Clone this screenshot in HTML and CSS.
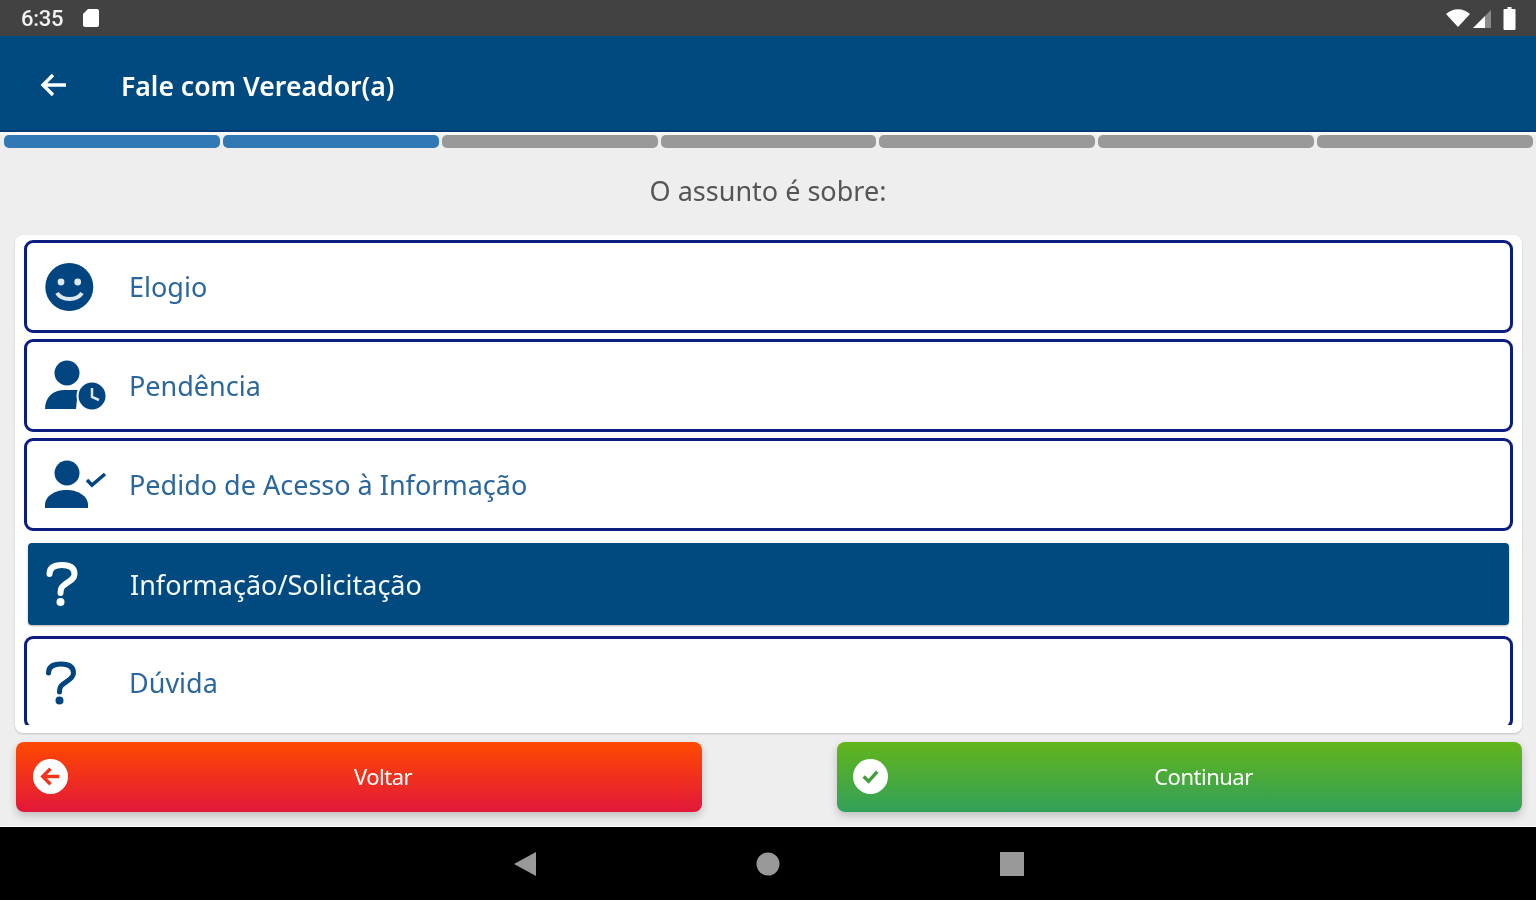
FILE: index.html
```html
<!DOCTYPE html>
<html lang="pt">
<head>
<meta charset="utf-8">
<title>Fale com Vereador(a)</title>
<link rel="stylesheet" href="styles.css">
</head>
<body>
<div class="page">
  <header class="statusbar">
    <div class="status-left">
      <span class="clock">6:35</span>
      <svg class="sd" viewBox="0 0 16 18"><path d="M5 0H14a2 2 0 0 1 2 2V16a2 2 0 0 1-2 2H2a2 2 0 0 1-2-2V5Z" fill="#fff"/></svg>
    </div>
    <div class="status-right">
      <svg class="wifi" viewBox="0 0 24 18"><path d="M0 5C7-1.5 17-1.500 24 5L12 18Z" fill="#fff"/></svg>
      <svg class="signal" viewBox="0 0 18 18"><path d="M0 18 12 6V18Z" fill="#fff"/><path d="M12 6 18 0V18H12Z" fill="#8a8a8a"/></svg>
      <svg class="battery" viewBox="0 0 12 23"><path d="M4 0H8V2H11a1 1 0 0 1 1 1V22a1 1 0 0 1-1 1H1a1 1 0 0 1-1-1V3a1 1 0 0 1 1-1H4Z" fill="#fff"/></svg>
    </div>
  </header>

  <div class="appbar">
    <svg class="back" viewBox="0 0 26 24"><path d="M13 2 3 12 13 22M3 12H26" fill="none" stroke="#fff" stroke-width="3.400"/></svg>
    <h1 class="apptitle">Fale com Vereador(a)</h1>
  </div>

  <main class="content">
    <div class="progress">
      <span class="step done"></span>
      <span class="step done"></span>
      <span class="step"></span>
      <span class="step"></span>
      <span class="step"></span>
      <span class="step"></span>
      <span class="step"></span>
    </div>
    <p class="question">O assunto é sobre:</p>
    <section class="card">
      <div class="list">
        <div class="item">
          <svg class="icon" viewBox="0 0 64 64">
            <circle cx="24.300" cy="32" r="24" fill="#00457f"/>
            <circle cx="16" cy="27" r="3.400" fill="#dfe8f0"/>
            <circle cx="32.700" cy="27" r="3.400" fill="#dfe8f0"/>
            <path d="M12 38C17 46 32 46 37 38" fill="none" stroke="#dfe8f0" stroke-width="4"/>
          </svg>
          <span class="label">Elogio</span>
        </div>
        <div class="item">
          <svg class="icon" viewBox="0 0 64 64">
            <circle cx="22" cy="19" r="12.500" fill="#00457f"/>
            <path d="M0 55C0 43 8 36 20 36H33L31 55Z" fill="#00457f"/>
            <circle cx="47" cy="42" r="15.500" fill="#fff"/>
            <circle cx="47" cy="42" r="13.500" fill="#00457f"/>
            <path d="M47 34V43L54 46" fill="none" stroke="#dfe8f0" stroke-width="2.500"/>
          </svg>
          <span class="label">Pendência</span>
        </div>
        <div class="item">
          <svg class="icon" viewBox="0 0 64 64">
            <circle cx="22" cy="20" r="12.500" fill="#00457f"/>
            <path d="M0 55V52C0 43 10 37 21.500 37S43 43 43 52V55Z" fill="#00457f"/>
            <path d="M42 27 47 32 60 21" fill="none" stroke="#00457f" stroke-width="3.500"/>
          </svg>
          <span class="label">Pedido de Acesso à Informação</span>
        </div>
        <div class="item selected">
          <svg class="icon" viewBox="0 0 64 64">
            <path d="M3.500 22C3.500 15 9 13 16 13C23 13 28.500 15 28.500 22C28.500 28 21 30 16.500 34.500C15 36 14.500 38 14.500 41" fill="none" stroke="#fff" stroke-width="6" stroke-linecap="round"/>
            <circle cx="14.500" cy="50" r="4" fill="#fff"/>
          </svg>
          <span class="label">Informação/Solicitação</span>
        </div>
        <div class="item">
          <svg class="icon" viewBox="0 0 64 64">
            <path d="M3.500 22C3.500 15 9 13 16 13C23 13 28.500 15 28.500 22C28.500 28 21 30 16.500 34.500C15 36 14.500 38 14.500 41" fill="none" stroke="#00457f" stroke-width="5" stroke-linecap="round"/>
            <circle cx="14.500" cy="49.500" r="4" fill="#00457f"/>
          </svg>
          <span class="label">Dúvida</span>
        </div>
      </div>
    </section>
    <div class="actions">
      <button class="btn btn-back">
        <svg class="btn-icon" viewBox="0 0 36 36">
          <circle cx="18" cy="18" r="18" fill="#fff"/>
          <path d="M18 10 10 18 18 26M10 18H27" fill="none" stroke="#f0351c" stroke-width="3.500"/>
        </svg>
        <span class="btn-label">Voltar</span>
      </button>
      <button class="btn btn-next">
        <svg class="btn-icon" viewBox="0 0 36 36">
          <circle cx="18" cy="18" r="18" fill="#fff"/>
          <path d="M11 18 16 23 25 13" fill="none" stroke="#3f9f3d" stroke-width="3.500"/>
        </svg>
        <span class="btn-label">Continuar</span>
      </button>
    </div>
  </main>

  <nav class="navbar">
    <svg class="nav-icon" viewBox="0 0 24 24"><path d="M23 0V24L1 12Z" fill="#999"/></svg>
    <svg class="nav-icon" viewBox="0 0 24 24"><circle cx="12" cy="12" r="11.500" fill="#999"/></svg>
    <svg class="nav-icon" viewBox="0 0 24 24"><rect width="24" height="24" fill="#999"/></svg>
  </nav>
</div>
</body>
</html>
```

FILE: styles.css
```css
* { box-sizing: border-box; }

html, body {
  margin: 0;
  padding: 0;
  background: #000;
}

body {
  font-family: "Noto Sans", "Open Sans", sans-serif;
}

.page {
  display: flex;
  flex-direction: column;
  width: 1536px;
  height: 900px;
  overflow: hidden;
  filter: blur(0.6px);
}

.statusbar {
  display: flex;
  flex: 0 0 36px;
  align-items: center;
  justify-content: space-between;
  padding: 0 20px 0 21px;
  background: #424242;
}

.status-left, .status-right {
  display: flex;
  align-items: center;
}

.clock {
  font-family: Roboto, sans-serif;
  font-size: 22px;
  font-weight: 500;
  letter-spacing: -0.3px;
  color: #f2f2f2;
}

.sd {
  width: 16px;
  height: 18px;
  margin-left: 20px;
}

.wifi { width: 24px; height: 18px; }
.signal { width: 18px; height: 18px; margin-left: 3px; margin-top: 2px; }
.battery { width: 13px; height: 23px; margin-left: 12px; }

.appbar {
  display: flex;
  flex: 0 0 96px;
  align-items: center;
  padding: 3px 0 0 40px;
  background: #004a80;
  border-bottom: 2px solid #003b78;
}

.back {
  width: 26px;
  height: 24px;
}

.apptitle {
  margin: 2px 0 0 55px;
  font-size: 26.600px;
  font-weight: 600;
  color: #fff;
}

.content {
  display: flex;
  flex: 0 0 695px;
  flex-direction: column;
  background: #eee;
  border-bottom: 1px solid #fff;
}

.progress {
  display: grid;
  grid-template-columns: repeat(7, 1fr);
  gap: 3px;
  height: 16px;
  padding: 3px 3px 0 4px;
  background: linear-gradient(#f8f8f8 3px, transparent 3px);
}

.step {
  border-radius: 5px;
  background: #999;
}

.step.done {
  background: #3079b5;
}

.question {
  display: flex;
  flex: 0 0 87px;
  align-items: center;
  justify-content: center;
  margin: 0;
  padding-bottom: 3px;
  font-size: 27px;
  color: #555;
}

.card {
  flex: 0 0 498px;
  margin: 0 14px 0 15px;
  padding: 5px 9px 8px;
  border-radius: 8px;
  background: #fff;
  box-shadow: 0 1px 2px rgba(0, 0, 0, 0.2);
}

.list {
  display: flex;
  flex-direction: column;
  gap: 6px;
  height: 485px;
  overflow: hidden;
}

.item {
  display: flex;
  flex: 0 0 93px;
  align-items: center;
  padding-left: 18px;
  border: 3.500px solid #0b1d80;
  border-radius: 9px;
  background: #fff;
}

.item.selected {
  flex-basis: 82px;
  margin: 6px 4px 5px;
  padding-left: 18px;
  border: 0;
  border-radius: 4px;
  background: #004a80;
  box-shadow: 0 1px 2px rgba(0, 0, 0, 0.3);
}

.item.selected .label {
  color: #f4f8fb;
}

.icon {
  flex: none;
  width: 64px;
  height: 64px;
}

.label {
  margin-left: 20px;
  font-size: 27px;
  color: #2b679c;
}

.actions {
  display: flex;
  justify-content: space-between;
  margin-top: 9px;
  padding: 0 14px 0 16px;
}

.btn {
  position: relative;
  display: flex;
  align-items: center;
  justify-content: center;
  width: 686px;
  height: 70px;
  padding: 0 0 2px 48px;
  border: 0;
  border-radius: 8px;
  box-shadow: 0 4px 8px rgba(0, 0, 0, 0.2);
  color: #fff;
  font-family: inherit;
}

.btn-back {
  background: linear-gradient(#ff4a00, #e2173a);
}

.btn-next {
  width: 685px;
  background: linear-gradient(#62b51a, #32a05a);
}

.btn-icon {
  position: absolute;
  top: 17px;
  left: 17px;
  width: 35px;
  height: 35px;
}

.btn-next .btn-icon {
  left: 16px;
}

.btn-label {
  font-size: 22px;
  letter-spacing: -0.5px;
}

.navbar {
  display: flex;
  flex: 1;
  align-items: center;
  justify-content: center;
  gap: 219.500px;
  background: #000;
}

.nav-icon {
  width: 24px;
  height: 24px;
}
```
